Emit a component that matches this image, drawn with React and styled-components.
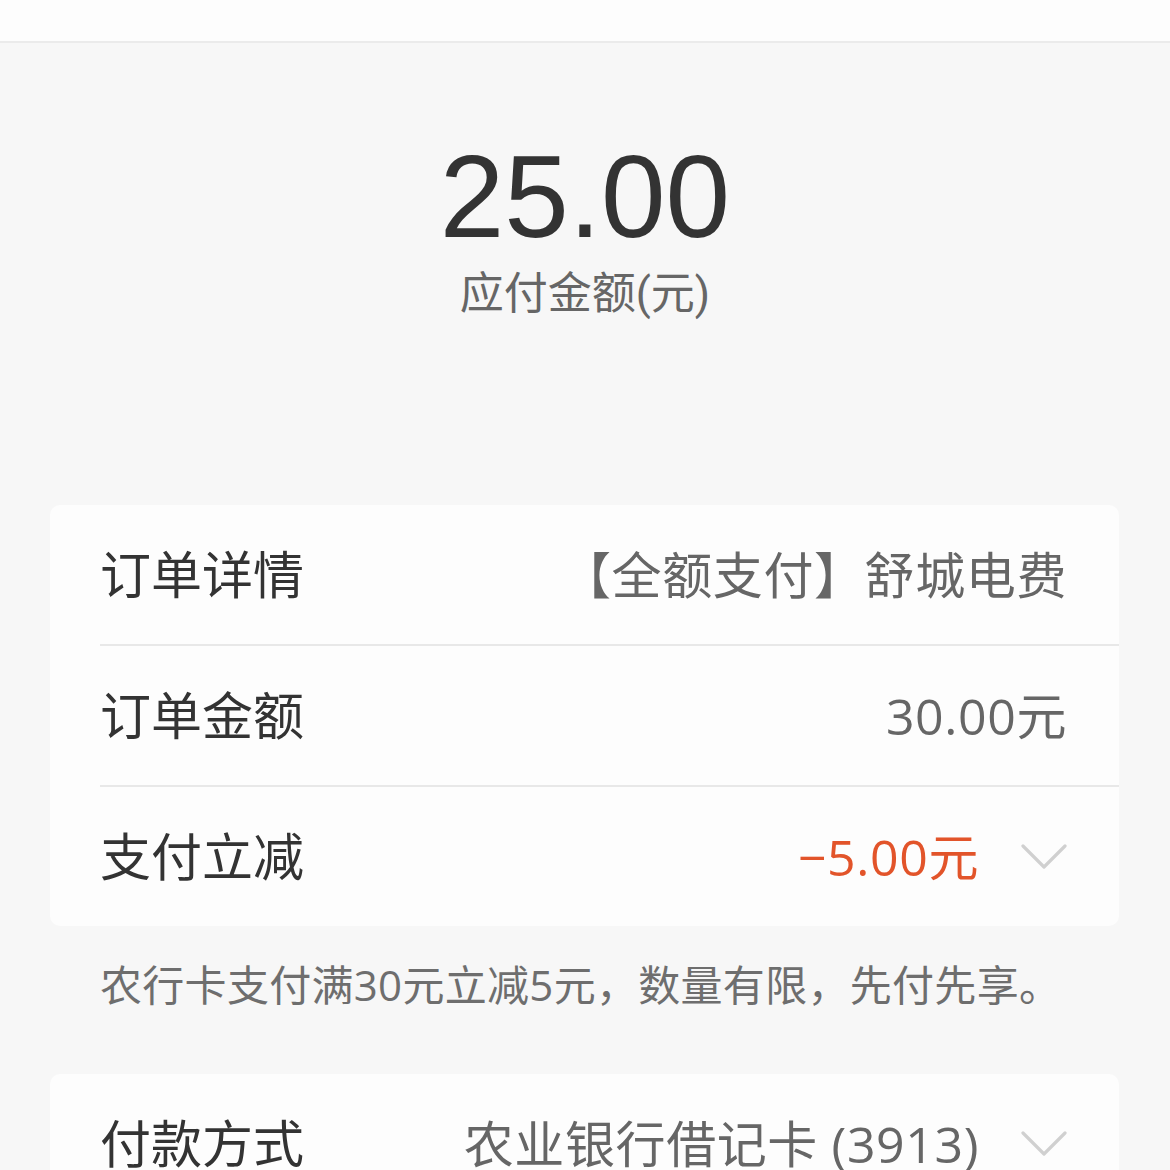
import React from "react";
import styled, { createGlobalStyle } from "styled-components";

const Global = createGlobalStyle`
  html, body { margin: 0; padding: 0; background: #f7f7f7; }
  body { font-family: "Open Sans", "Noto Sans CJK SC", sans-serif; }
`;

const Page = styled.div`
  width: 1170px;
  min-height: 1170px;
  background: #f7f7f7;
  overflow: hidden;
`;

const TopBar = styled.div`
  height: 41px;
  background: #fdfdfd;
  border-bottom: 2px solid #ebebeb;
`;

const Hero = styled.div`
  display: flex;
  flex-direction: column;
  align-items: center;
  padding: 97px 0 189px;
`;

const Amount = styled.div`
  font-family: "Liberation Sans", Arial, sans-serif;
  font-size: 116px;
  line-height: 115px;
  color: #333;
`;

const AmountLabel = styled.div`
  margin-top: 17px;
  font-family: Roboto, "Noto Sans CJK SC", sans-serif;
  font-size: 44px;
  line-height: 44px;
  color: #666;
`;

const Card = styled.div`
  margin: 0 51px 0 50px;
  background: #fdfdfd;
  border-radius: 10px;
`;

const Row = styled.div`
  display: flex;
  align-items: center;
  justify-content: space-between;
  height: 139px;
  margin-left: 50px;
  padding-right: 52px;
  border-bottom: 2px solid #e8e8e8;
  &:last-child { border-bottom: none; }
`;

const Label = styled.div`
  font-size: 51px;
  line-height: 1;
  color: #333;
`;

const ValueGroup = styled.div`
  display: flex;
  align-items: center;
  gap: 42px;
`;

const Value = styled.div`
  font-size: 50px;
  line-height: 1;
  letter-spacing: 0.6px;
  color: ${(p) => (p.$accent ? "#e2542a" : "#666")};
`;

const Hint = styled.div`
  padding: 37px 0 68px 100px;
  font-size: 42px;
  line-height: 43px;
  letter-spacing: 0.3px;
  color: #6e6e6e;
`;

const Chevron = () => (
  <svg width="46" height="28" viewBox="0 0 46 28" fill="none">
    <polyline points="2,3 23,24 44,3" stroke="#d0d0d0" strokeWidth="3.2" strokeLinecap="round" strokeLinejoin="round" />
  </svg>
);

export default function App() {
  return (
    <Page>
      <Global />
      <TopBar />
      <Hero>
        <Amount>25.00</Amount>
        <AmountLabel>应付金额(元)</AmountLabel>
      </Hero>
      <Card>
        <Row>
          <Label>订单详情</Label>
          <Value>【全额支付】舒城电费</Value>
        </Row>
        <Row>
          <Label>订单金额</Label>
          <Value>30.00元</Value>
        </Row>
        <Row>
          <Label>支付立减</Label>
          <ValueGroup>
            <Value $accent>−5.00元</Value>
            <Chevron />
          </ValueGroup>
        </Row>
      </Card>
      <Hint>农行卡支付满30元立减5元，数量有限，先付先享。</Hint>
      <Card>
        <Row>
          <Label>付款方式</Label>
          <ValueGroup>
            <Value>农业银行借记卡 (3913)</Value>
            <Chevron />
          </ValueGroup>
        </Row>
      </Card>
    </Page>
  );
}
